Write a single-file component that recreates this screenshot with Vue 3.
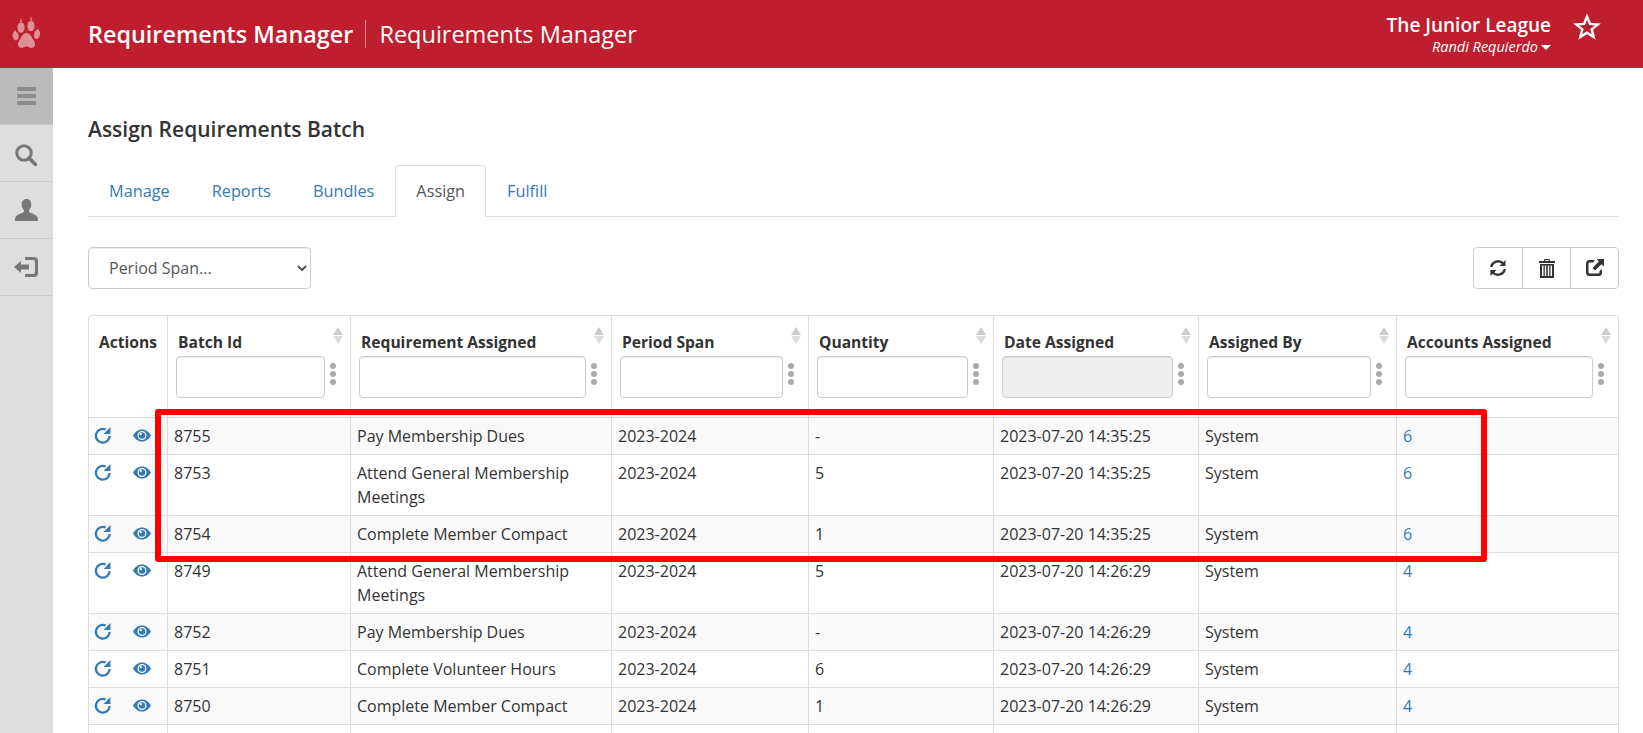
<script setup>
const tabs = [
  { label: 'Manage' },
  { label: 'Reports' },
  { label: 'Bundles' },
  { label: 'Assign', active: true },
  { label: 'Fulfill' },
]
const columns = [
  { label: 'Batch Id' },
  { label: 'Requirement Assigned' },
  { label: 'Period Span' },
  { label: 'Quantity' },
  { label: 'Date Assigned', disabled: true },
  { label: 'Assigned By' },
  { label: 'Accounts Assigned' },
]
const rows = [
  ['8755', 'Pay Membership Dues', '2023-2024', '-', '2023-07-20 14:35:25', 'System', '6'],
  ['8753', 'Attend General Membership Meetings', '2023-2024', '5', '2023-07-20 14:35:25', 'System', '6'],
  ['8754', 'Complete Member Compact', '2023-2024', '1', '2023-07-20 14:35:25', 'System', '6'],
  ['8749', 'Attend General Membership Meetings', '2023-2024', '5', '2023-07-20 14:26:29', 'System', '4'],
  ['8752', 'Pay Membership Dues', '2023-2024', '-', '2023-07-20 14:26:29', 'System', '4'],
  ['8751', 'Complete Volunteer Hours', '2023-2024', '6', '2023-07-20 14:26:29', 'System', '4'],
  ['8750', 'Complete Member Compact', '2023-2024', '1', '2023-07-20 14:26:29', 'System', '4'],
]
</script>

<template>
  <div class="page">
    <header class="topbar">
      <div class="logo">
        <svg width="30" height="36" viewBox="0 0 30 36">
          <g fill="#fff" fill-opacity=".5">
            <ellipse cx="9" cy="11.5" rx="3.6" ry="5.2" />
            <ellipse cx="19" cy="10" rx="3.6" ry="5.2" />
            <ellipse cx="3.6" cy="20" rx="2.9" ry="4.4" transform="rotate(-12 3.6 20)" />
            <ellipse cx="25" cy="18.5" rx="2.9" ry="4.4" transform="rotate(12 25 18.5)" />
            <path d="M14.5 17c3 0 4.500 3 6 5.500 1.500 2.500 3 4 2.500 6.500-.5 2.500-3.500 3.500-5.500 2.500-1.500-.7-2.200-1-3-1s-1.500.3-3 1c-2 1-5 0-5.500-2.500-.5-2.500 1-4 2.500-6.500 1.500-2.500 3-5.500 6-5.500z" />
            <path d="M9 1.500 10 6H8zM19 0l1 4.500h-2zM3 13.500l1 3H2.200zM26 12l.8 3H25z" />
          </g>
        </svg>
      </div>
      <div class="brand">
        <span class="brand-main">Requirements Manager</span>
        <span class="brand-sub">Requirements Manager</span>
      </div>
      <div class="account">
        <div class="org">The Junior League</div>
        <div class="user">Randi Requierdo<span class="caret"></span></div>
      </div>
      <svg class="star" width="28" height="28" viewBox="0 0 28 28">
        <path d="M14 3.500l2.900 7.400 7.900.5-6.100 5 2 7.700-6.700-4.300-6.700 4.300 2-7.700-6.100-5 7.900-.5z" fill="none" stroke="#fff" stroke-width="2.400" stroke-linejoin="miter" />
      </svg>
    </header>

    <div class="body">
      <nav class="sidebar">
        <div class="side-item current">
          <svg width="19" height="18" viewBox="0 0 19 18" fill="#8c8c8c"><rect width="19" height="4" /><rect y="7" width="19" height="4" /><rect y="14" width="19" height="4" /></svg>
        </div>
        <div class="side-item">
          <svg class="search-icon" width="22" height="22" viewBox="0 0 22 22" fill="none" stroke="#777"><circle cx="9" cy="9" r="7.200" stroke-width="3" /><path d="M14 14l6.500 6.500" stroke-width="3.800" stroke-linecap="round" /></svg>
        </div>
        <div class="side-item">
          <svg width="23" height="22" viewBox="0 0 23 22" fill="#777"><path d="M11.500 0c3 0 4.800 2.400 4.800 5.400 0 2.400-1 4.400-2.300 5.600v2c1 .9 6 2 8 4.200.8 1 1 3 1 4.800H0c0-1.800.2-3.800 1-4.800 2-2.200 7-3.300 8-4.200v-2C7.700 9.800 6.700 7.800 6.700 5.400 6.700 2.400 8.500 0 11.500 0z" /></svg>
        </div>
        <div class="side-item">
          <svg class="exit-icon" width="24" height="20" viewBox="0 0 24 20" fill="#777"><path d="M0 10l7-6v3.500h8v5H7V16z" /><path d="M11 0h9a4 4 0 0 1 4 4v12a4 4 0 0 1-4 4h-9v-3h8a2 2 0 0 0 2-2V5a2 2 0 0 0-2-2h-8z" /></svg>
        </div>
      </nav>

      <main class="content">
        <h1 class="title">Assign Requirements Batch</h1>

        <ul class="tabs">
          <li v-for="tab in tabs" :key="tab.label" class="tab" :class="{ active: tab.active }">{{ tab.label }}</li>
        </ul>

        <div class="toolbar">
          <select class="period">
            <option>Period Span...</option>
          </select>
          <div class="btn-group">
            <button class="btn" type="button">
              <svg width="18" height="18" viewBox="0 0 18 18" fill="none" stroke="#333" stroke-width="2.400">
                <path d="M2.200 8a7 7 0 0 1 12-3.500" />
                <path d="M15.800 10a7 7 0 0 1-12 3.500" />
                <path d="M16.500 1v6h-6zM1.500 17v-6h6z" fill="#333" stroke="none" />
              </svg>
            </button>
            <button class="btn" type="button">
              <svg width="16" height="19" viewBox="0 0 16 19" fill="#333">
                <path d="M5.500 0h5l.6 2H16v2H0V2h4.900zM6.300 1l-.2 1h3.800l-.2-1z" fill-rule="evenodd" />
                <path d="M1 5h14v14H1zM3 6.500V17h1.500V6.500zM5.800 6.500V17h1.400V6.500zM8.800 6.500V17h1.400V6.500zM11.500 6.500V17H13V6.500z" fill-rule="evenodd" />
              </svg>
            </button>
            <button class="btn" type="button">
              <svg width="19" height="18" viewBox="0 0 19 18" fill="#333">
                <path d="M10 1H4.500A3.500 3.500 0 0 0 1 4.500v9A3.500 3.500 0 0 0 4.500 17h9a3.500 3.500 0 0 0 3.500-3.500V10l-2.500 2v1.500a1 1 0 0 1-1 1h-9a1 1 0 0 1-1-1v-9a1 1 0 0 1 1-1H8z" />
                <path d="M19 0v7.500l-2.500-2.300L10 11.500 7.500 9l6.400-6.400L11.500 0z" />
              </svg>
            </button>
          </div>
        </div>

        <div class="table-wrap">
          <table class="grid">
            <colgroup>
              <col style="width: 79px" />
              <col style="width: 183px" />
              <col style="width: 261px" />
              <col style="width: 197px" />
              <col style="width: 185px" />
              <col style="width: 205px" />
              <col style="width: 198px" />
              <col />
            </colgroup>
            <thead>
              <tr>
                <th class="actions-head">Actions</th>
                <th v-for="col in columns" :key="col.label">
                  <div class="head-label">{{ col.label }}</div>
                  <span class="sort"><i class="up"></i><i class="down"></i></span>
                  <div class="filter">
                    <input class="filter-input" :disabled="col.disabled" />
                    <span class="dots"><i></i><i></i><i></i></span>
                  </div>
                </th>
              </tr>
            </thead>
            <tbody>
              <tr v-for="row in rows" :key="row[0]">
                <td class="actions">
                  <div class="action-icons">
                    <svg class="redo" width="18" height="18" viewBox="0 0 17 17" fill="none" stroke="#337ab7" stroke-width="2.200">
                      <path d="M14.800 9.500A6.500 6.500 0 1 1 11 3.300" />
                      <path d="M15.500 1v6.500H9z" fill="#337ab7" stroke="none" />
                    </svg>
                    <svg class="eye" width="18" height="13" viewBox="0 0 18 13">
                      <path fill="#337ab7" fill-rule="evenodd" d="M9 .5c4 0 7.200 2.700 9 6-1.800 3.300-5 6-9 6s-7.200-2.700-9-6c1.800-3.300 5-6 9-6zM9 2a4.500 4.500 0 1 0 0 9 4.500 4.500 0 0 0 0-9z" />
                      <circle cx="9" cy="6.500" r="3.200" fill="#337ab7" />
                      <circle cx="7.800" cy="5.200" r="1.100" fill="#fff" />
                    </svg>
                  </div>
                </td>
                <td v-for="(cell, i) in row" :key="i">
                  <span :class="{ link: i === 6 }">{{ cell }}</span>
                </td>
              </tr>
              <tr>
                <td v-for="n in 8" :key="n" class="blank"></td>
              </tr>
            </tbody>
          </table>
          <div class="highlight"></div>
        </div>
      </main>
    </div>
  </div>
</template>

<style>
html, body { margin: 0; height: 100%; overflow: hidden; background: #fff; }
</style>

<style scoped>
.page {
  height: 733px;
  overflow: hidden;
  font-family: "Open Sans", "Noto Sans", sans-serif;
  font-size: 16px;
  color: #333;
}
.topbar {
  height: 68px;
  background: #be1e2d;
  display: flex;
  align-items: center;
  color: #fff;
}
.logo {
  width: 53px;
  margin-right: 35px;
  display: flex;
  justify-content: center;
  flex-shrink: 0;
}
.brand { display: flex; align-items: center; flex: 1; }
.brand-main {
  font-size: 23.400px;
  font-weight: 600;
  padding-right: 12px;
  border-right: 1px solid rgba(255, 255, 255, .5);
  line-height: 28px;
}
.brand-sub { font-size: 23.500px; padding-left: 13px; line-height: 28px; }
.account { text-align: right; margin-right: 22px; }
.org { font-size: 19px; font-weight: 600; line-height: 25px; }
.user { font-size: 14.500px; font-style: italic; line-height: 17px; }
.caret {
  display: inline-block;
  margin-left: 3px;
  vertical-align: 2px;
  border-left: 5px solid transparent;
  border-right: 5px solid transparent;
  border-top: 5px solid #fff;
}
.star { margin-right: 42px; margin-top: -14px; }
.body { display: flex; height: 665px; }
.sidebar { width: 53px; background: #dedede; flex-shrink: 0; }
.side-item {
  height: 56px;
  border-bottom: 1px solid #ccc;
  display: flex;
  align-items: center;
  justify-content: center;
}
.side-item.current { background: #bbb; }
.search-icon { margin-top: 3px; margin-right: 1px; }
.exit-icon { margin-right: 2px; }
.content { flex: 1; padding: 47px 24px 0 35px; min-width: 0; }
.title { margin: 0 0 22px; font-size: 21px; font-weight: 600; line-height: 28px; color: #333; }
.tabs {
  list-style: none;
  margin: 0 0 30px;
  padding: 0;
  display: flex;
  border-bottom: 1px solid #ddd;
  height: 51px;
  font-size: 16.300px;
}
.tab {
  padding: 13px 20px;
  line-height: 24px;
  height: 24px;
  color: #337ab7;
  border: 1px solid transparent;
  border-bottom: 0;
  border-radius: 4px 4px 0 0;
}
.tab.active {
  color: #555;
  background: #fff;
  border-color: #ddd;
  height: 25px;
}
.toolbar { display: flex; justify-content: space-between; margin-bottom: 26px; height: 42px; }
.period {
  width: 223px;
  height: 42px;
  padding: 0 16px;
  background: #fff;
  border: 1px solid #ccc;
  border-radius: 4px;
  font: inherit;
  color: #555;
  box-shadow: inset 0 1px 1px rgba(0, 0, 0, .075);
}
.btn-group { display: flex; }
.btn {
  width: 49px;
  height: 42px;
  background: #fff;
  border: 1px solid #ccc;
  margin-left: -1px;
  padding: 0;
  display: flex;
  align-items: center;
  justify-content: center;
}
.btn:first-child { border-radius: 4px 0 0 4px; width: 50px; }
.btn:last-child { border-radius: 0 4px 4px 0; }
.table-wrap {
  position: relative;
  border: 1px solid #ddd;
  border-bottom: 0;
  border-radius: 4px 4px 0 0;
}
.grid { width: 100%; table-layout: fixed; border-collapse: separate; border-spacing: 0; }
th, td {
  border-right: 1px solid #ddd;
  border-bottom: 1px solid #ddd;
  text-align: left;
  vertical-align: top;
  padding: 6px;
  line-height: 24px;
  font-weight: 400;
}
th:last-child, td:last-child { border-right: 0; }
th {
  position: relative;
  padding: 14px 8px 19px;
  font-weight: 700;
  font-size: 15.600px;
}
th.actions-head { padding-left: 10px; padding-right: 0; }
.head-label { padding-left: 2px; white-space: nowrap; }
.actions-head { white-space: nowrap; }
.sort {
  position: absolute;
  right: 7px;
  top: 11px;
  display: flex;
  flex-direction: column;
  gap: 1px;
}
.sort i {
  display: block;
  border-left: 5px solid transparent;
  border-right: 5px solid transparent;
}
.sort .up { border-bottom: 8px solid #ccc; }
.sort .down { border-top: 8px solid #ddd; }
.filter { display: flex; align-items: center; margin-top: 2px; padding-right: 6px; }
.filter-input {
  flex: 1;
  min-width: 0;
  height: 42px;
  box-sizing: border-box;
  border: 1px solid #ccc;
  border-radius: 4px;
  background: #fff;
  padding: 0;
  box-shadow: inset 0 1px 1px rgba(0, 0, 0, .075);
}
.filter-input:disabled { background: #eee; }
.dots { display: flex; flex-direction: column; gap: 2px; margin-left: 5px; margin-top: -6px; }
.dots i { width: 6px; height: 6px; border-radius: 50%; background: #aaa; display: block; }
tbody tr:nth-child(odd) td { background: #f9f9f9; }
tbody tr:nth-child(8) td { background: #fff; }
.action-icons { display: flex; justify-content: space-between; padding-right: 10px; height: 24px; align-items: center; }
.redo { margin-top: -2px; margin-left: -1px; }
.eye { margin-top: -2px; }
.link { color: #337ab7; }
.blank { height: 24px; }
.highlight {
  position: absolute;
  left: 66px;
  top: 93px;
  width: 1332px;
  height: 153px;
  box-sizing: border-box;
  border: 6px solid #f00;
  border-radius: 3px;
  pointer-events: none;
}
</style>
